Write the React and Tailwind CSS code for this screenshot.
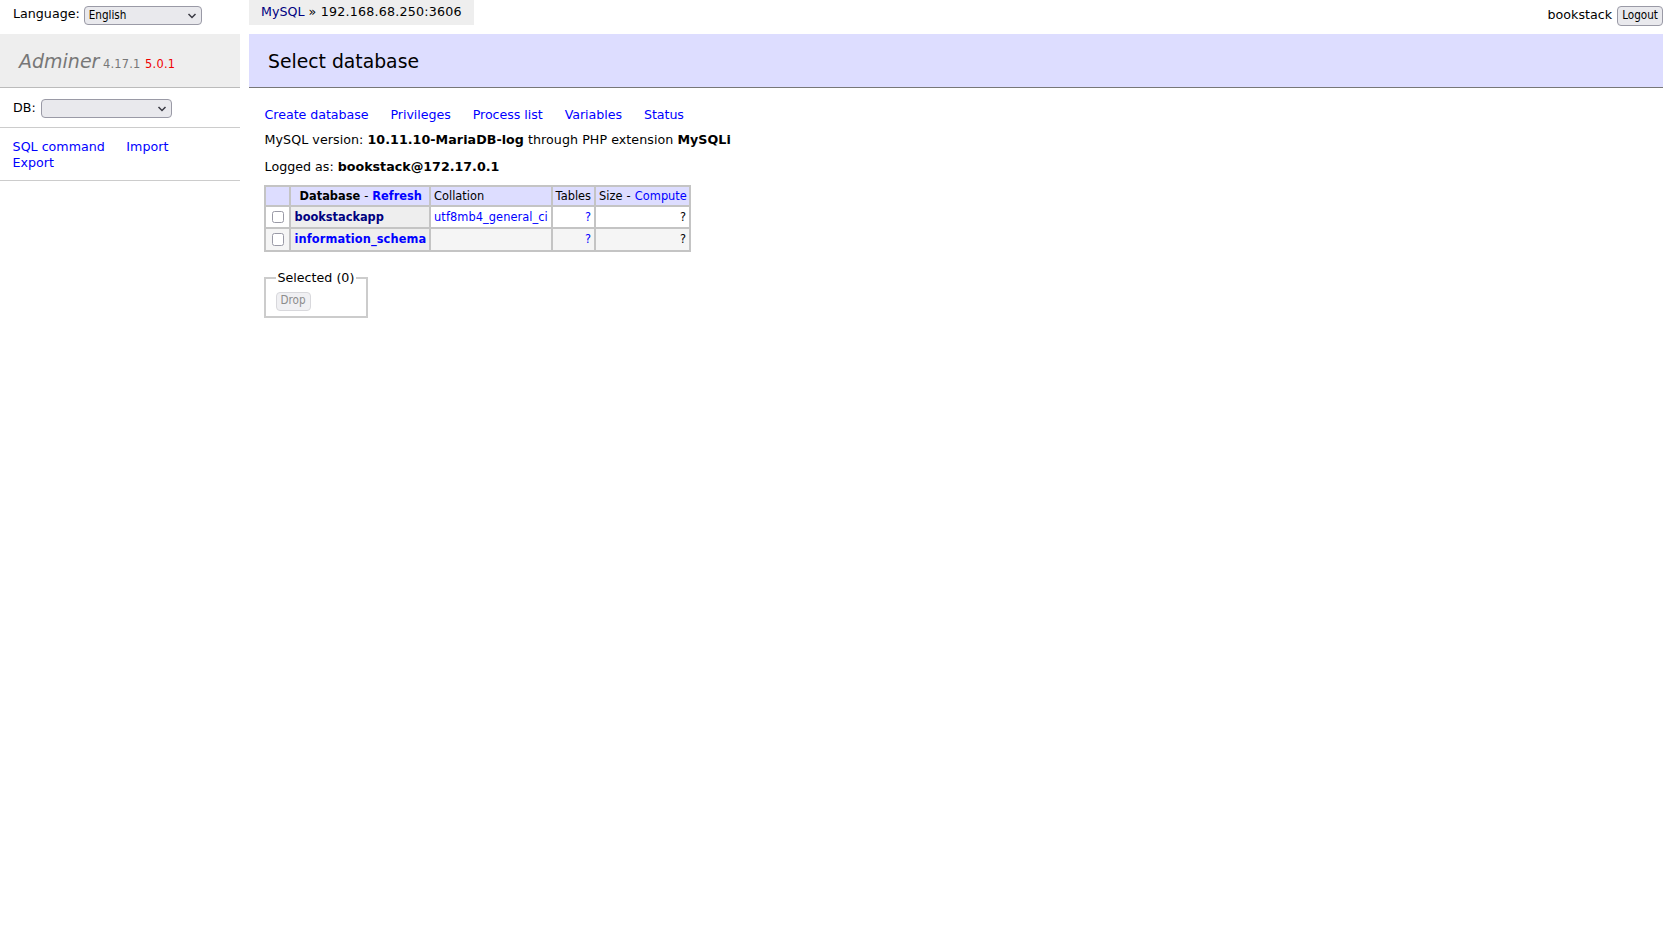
import React from 'react';

function Chevron({ cls }) {
  return (
    <svg className={cls} width="10" height="6" viewBox="0 0 10 6" fill="none" stroke="#3a3a44" strokeWidth="1.5">
      <path d="M1.5 1 L5 4.5 L8.5 1" />
    </svg>
  );
}

function NativeSelect({ value, widthCls }) {
  return (
    <span className={`relative inline-block ${widthCls} h-[19.5px]`}>
      <select
        defaultValue={value}
        className="appearance-none block w-full h-full bg-[#e9e9ed] border border-[#9a9aa6] rounded-[4px] pl-[4px] pr-[16px] text-black text-[11.6px] font-['DejaVu_Sans_Condensed','DejaVu_Sans',sans-serif]"
      >
        <option>{value}</option>
      </select>
      <Chevron cls="absolute right-[5px] top-[7px] pointer-events-none" />
    </span>
  );
}

const Td = ({ children, className = '' }) => (
  <td className={`border-2 border-[#c4c4c4] pl-[3.5px] pr-[2.5px] py-0 h-[21.5px] whitespace-nowrap text-[11.4px] leading-[14px] ${className}`}>{children}</td>
);
const Th = ({ children, className = '' }) => (
  <th className={`border-2 border-[#c4c4c4] pl-[3.5px] pr-[2.5px] py-0 h-[21.5px] whitespace-nowrap text-[11.4px] leading-[14px] text-left ${className}`}>{children}</th>
);
const Check = () => (
  <input type="checkbox" className="appearance-none block mx-auto w-[12.5px] h-[12.5px] bg-white border border-[#9a9aa6] rounded-[2.5px]" />
);

export default function App() {
  return (
    <div className="flex w-[1663px] min-h-[945px] bg-white text-black text-[12.67px] leading-[1.25] font-['DejaVu_Sans',Verdana,sans-serif]">
      <div className="w-[240px] shrink-0 mr-[8.6px]">
        <div className="h-[34px] pl-[13px] pt-[5.5px] flex items-start gap-[4px]">
          <span className="leading-[16px]">Language:</span>
          <NativeSelect value="English" widthCls="w-[118px]" />
        </div>
        <div className="h-[54px] bg-[#eee] border-b border-[#bbb] pl-[19px] pt-[2px] flex items-center">
          <span className="italic text-[#777] text-[19px]">Adminer</span>
          <span className="text-[#777] text-[11.4px] ml-[3.6px] tracking-[0.2px] mt-[5px]">4.17.1</span>
          <span className="text-[#e00] text-[11.4px] ml-[4.5px] tracking-[0.3px] mt-[5px]">5.0.1</span>
        </div>
        <div className="h-[40px] border-b border-[#ccc] pl-[13px] pt-[10.5px] flex items-start gap-[5px]">
          <span className="leading-[16px] mt-[1px]">DB:</span>
          <NativeSelect value="" widthCls="w-[131px]" />
        </div>
        <div className="h-[52.5px] border-b border-[#ccc] pl-[12.6px] pt-[11px] text-[#00f]">
          <div className="flex gap-[21.5px]">
            <a>SQL command</a>
            <a>Import</a>
          </div>
          <a className="block">Export</a>
        </div>
      </div>

      <div className="flex-1 min-w-0">
        <div className="h-[34px] flex items-start justify-between">
          <div className="h-[25px] w-[225px] bg-[#eee] pl-[12.5px] pt-[4px]">
            <a className="text-[#000080]">MySQL</a> <span className="tracking-[0.2px]">» 192.168.68.250:3606</span>
          </div>
          <div className="flex items-start gap-[5px] pt-[6px]">
            <span className="leading-[16px] mt-[1px]">bookstack</span>
            <button className="h-[19.5px] w-[46px] bg-[#e9e9ed] border border-[#9a9aa6] rounded-[4px] text-[11.6px] leading-none font-['DejaVu_Sans_Condensed','DejaVu_Sans',sans-serif]">Logout</button>
          </div>
        </div>
        <h2 className="h-[54px] bg-[#ddf] border-b border-[#777] pl-[19.4px] pt-[2px] flex items-center text-[18.8px] font-normal">Select database</h2>

        <div className="pl-[16px]">
          <p className="mt-[18.8px] flex gap-[22px] text-[#00f] tracking-[-0.06px]">
            <a>Create database</a>
            <a>Privileges</a>
            <a>Process list</a>
            <a>Variables</a>
            <a>Status</a>
          </p>
          <p className="mt-[9.4px] tracking-[0.05px]">MySQL version: <b>10.11.10-MariaDB-log</b> through PHP extension <b>MySQLi</b></p>
          <p className="mt-[11px]">Logged as: <b>bookstack@172.17.0.1</b></p>

          <table className="mt-[10px] -ml-[1px] border-collapse w-[425px] table-fixed">
            <colgroup>
              <col className="w-[25.5px]" />
              <col className="w-[139.5px]" />
              <col className="w-[122px]" />
              <col className="w-[43px]" />
              <col className="w-[95px]" />
            </colgroup>
            <thead>
              <tr className="bg-[#ddf]">
                <Td className="!h-[20.5px]"></Td>
                <Th className="!h-[20.5px] pl-[8.5px]"><b>Database</b> <span className="font-normal">-</span> <a className="text-[#00f]">Refresh</a></Th>
                <Td className="!h-[20.5px]">Collation</Td>
                <Td className="!h-[20.5px] !pl-[3px] !pr-0">Tables</Td>
                <Td className="!h-[20.5px] !pr-0">Size <span className="mx-[0.5px]">-</span> <a className="text-[#00f]">Compute</a></Td>
              </tr>
            </thead>
            <tbody>
              <tr>
                <Td><Check /></Td>
                <Th className="bg-[#eee]"><a className="text-[#000080] font-bold tracking-[-0.03px]">bookstackapp</a></Th>
                <Td><a className="text-[#00f] tracking-[0.06px]">utf8mb4_general_ci</a></Td>
                <Td className="text-right"><a className="text-[#00f]">?</a></Td>
                <Td className="text-right">?</Td>
              </tr>
              <tr className="bg-[#f5f5f5]">
                <Td className="!h-[23.5px]"><Check /></Td>
                <Th className="!h-[23.5px] bg-[#eee]"><a className="text-[#00f] font-bold tracking-[0.1px]">information_schema</a></Th>
                <Td className="!h-[23.5px]"></Td>
                <Td className="!h-[23.5px] text-right"><a className="text-[#00f]">?</a></Td>
                <Td className="!h-[23.5px] text-right">?</Td>
              </tr>
            </tbody>
          </table>

          <fieldset className="mt-[18px] -ml-[0.6px] w-[103.5px] h-[48px] border-2 border-[#ccc] pl-[9.5px] pr-[9px]">
            <legend className="px-[2px] whitespace-nowrap">Selected (0)</legend>
            <button disabled className="block mt-[5.5px] h-[19px] w-[35px] bg-[#f0f0f3] border border-[#d8d8dc] rounded-[4px] text-[#8c8c8c] text-[11.6px] leading-none font-['DejaVu_Sans_Condensed','DejaVu_Sans',sans-serif]">Drop</button>
          </fieldset>
        </div>
      </div>
    </div>
  );
}
